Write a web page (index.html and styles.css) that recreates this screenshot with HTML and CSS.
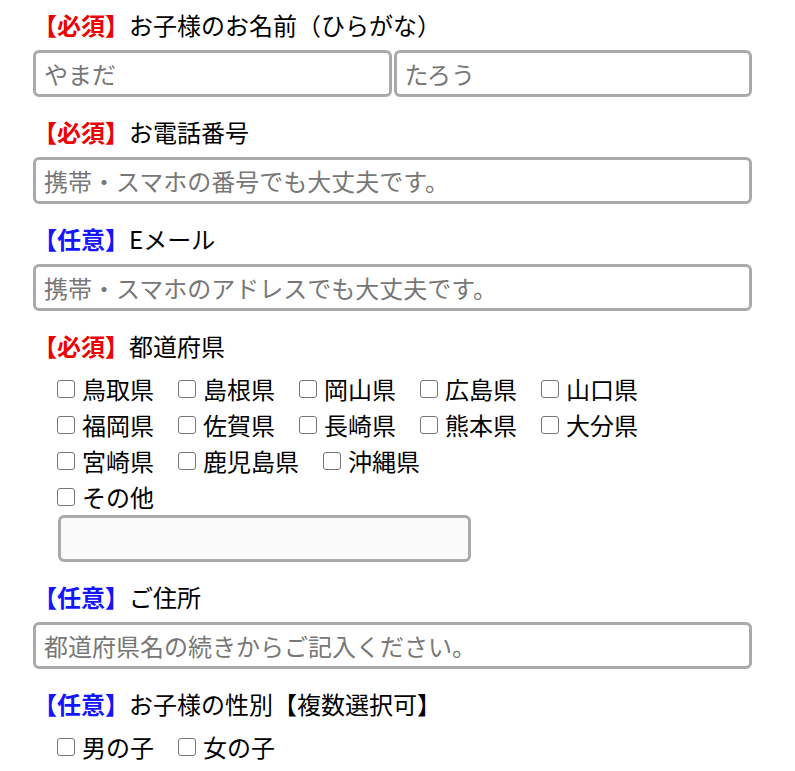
FILE: index.html
```html
<!DOCTYPE html>
<html lang="ja">
<head>
  <meta charset="UTF-8">
  <meta name="viewport" content="width=device-width, initial-scale=1.0">
  <title>お問い合わせフォーム</title>
  <link rel="stylesheet" href="styles.css">
</head>
<body>

<form class="entry">
  <div class="field">
    <div class="label"><span class="req">【必須】</span>お子様のお名前（ひらがな）</div>
    <div class="names">
      <input type="text" class="text" placeholder="やまだ">
      <input type="text" class="text" placeholder="たろう">
    </div>
  </div>

  <div class="field">
    <div class="label"><span class="req">【必須】</span>お電話番号</div>
    <input type="tel" class="text" placeholder="携帯・スマホの番号でも大丈夫です。">
  </div>

  <div class="field">
    <div class="label"><span class="opt">【任意】</span>Eメール</div>
    <input type="email" class="text" placeholder="携帯・スマホのアドレスでも大丈夫です。">
  </div>

  <div class="field">
    <div class="label"><span class="req">【必須】</span>都道府県</div>
    <div class="checks">
      <label class="check"><input type="checkbox">鳥取県</label>
      <label class="check"><input type="checkbox">島根県</label>
      <label class="check"><input type="checkbox">岡山県</label>
      <label class="check"><input type="checkbox">広島県</label>
      <label class="check"><input type="checkbox">山口県</label>
    </div>
    <div class="checks">
      <label class="check"><input type="checkbox">福岡県</label>
      <label class="check"><input type="checkbox">佐賀県</label>
      <label class="check"><input type="checkbox">長崎県</label>
      <label class="check"><input type="checkbox">熊本県</label>
      <label class="check"><input type="checkbox">大分県</label>
    </div>
    <div class="checks">
      <label class="check"><input type="checkbox">宮崎県</label>
      <label class="check"><input type="checkbox">鹿児島県</label>
      <label class="check"><input type="checkbox">沖縄県</label>
    </div>
    <div class="checks">
      <label class="check"><input type="checkbox">その他</label>
    </div>
    <input type="text" class="text other">
  </div>

  <div class="field">
    <div class="label"><span class="opt">【任意】</span>ご住所</div>
    <input type="text" class="text" placeholder="都道府県名の続きからご記入ください。">
  </div>

  <div class="field">
    <div class="label"><span class="opt">【任意】</span>お子様の性別【複数選択可】</div>
    <div class="checks">
      <label class="check"><input type="checkbox">男の子</label>
      <label class="check"><input type="checkbox">女の子</label>
    </div>
  </div>
</form>

</body>
</html>
```

FILE: styles.css
```css
body {
  margin: 0;
  font-family: "Noto Sans CJK JP", "Noto Sans", sans-serif;
  font-size: 24px;
  color: #000;
  background: #fff;
}

.entry {
  width: 719px;
  margin: 0 0 0 33px;
  padding-top: 7px;
}

.field {
  margin-bottom: 17px;
}

.label {
  line-height: 36px;
  height: 36px;
  margin-bottom: 7px;
  white-space: nowrap;
}

.req {
  color: #ee0000;
  font-weight: bold;
}

.opt {
  color: #1515ff;
  font-weight: bold;
}

.names {
  display: flex;
  gap: 2px;
}

.text {
  display: block;
  box-sizing: border-box;
  width: 100%;
  height: 47px;
  margin: 0;
  padding: 0 8px;
  border: 3px solid #aaa;
  border-radius: 6px;
  background: #fff;
  font-family: inherit;
  font-size: 24px;
  color: #000;
  outline: none;
}

.names .text {
  flex: 1;
  min-width: 0;
}

.text::placeholder {
  color: #777;
}

.other {
  width: 413px;
  margin: 0 0 2px 25px;
  background: #fafafa;
}

.checks {
  display: flex;
  padding-left: 24px;
  height: 36px;
  line-height: 36px;
}

.check {
  display: flex;
  align-items: center;
  margin-right: 24px;
  white-space: nowrap;
}

.check input {
  appearance: none;
  box-sizing: border-box;
  width: 18px;
  height: 18px;
  margin: 0 7px 0 0;
  border: 1.5px solid #767676;
  border-radius: 3px;
  background: #fff;
}

.check input:checked {
  background: #0075ff;
  border-color: #0075ff;
}
```
